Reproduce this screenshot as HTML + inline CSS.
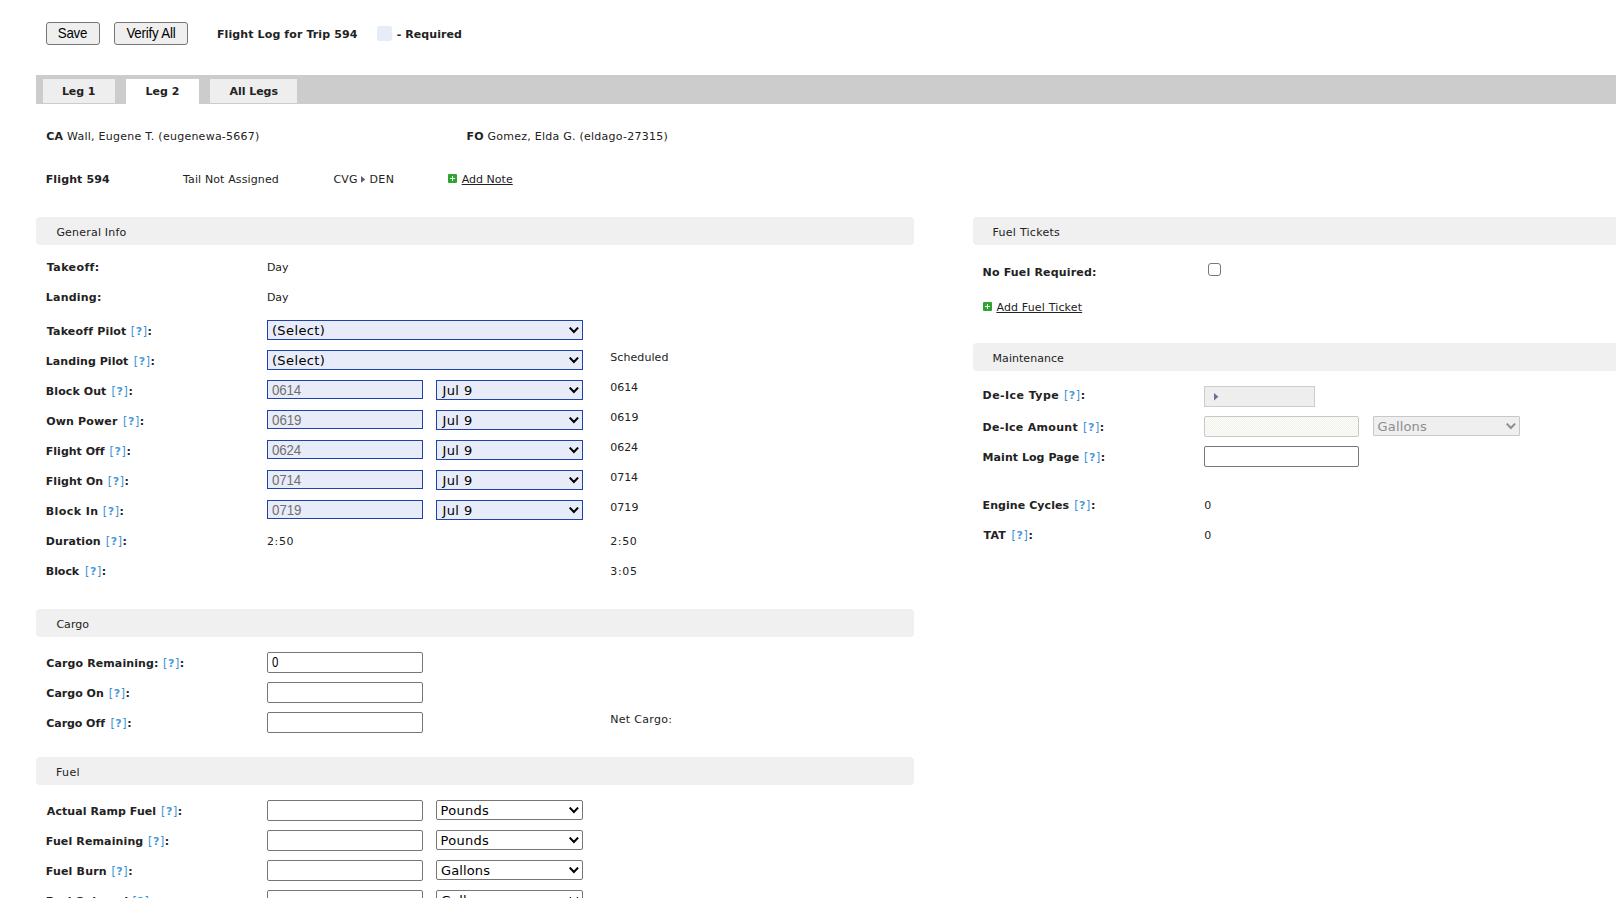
<!DOCTYPE html>
<html><head><meta charset="utf-8"><title>Flight Log for Trip 594</title>
<style>
html,body{margin:0;padding:0;background:#fff;overflow:hidden;}
body{width:1616px;height:898px;}
#root{width:1616px;height:898px;overflow:hidden;position:relative;font-family:"DejaVu Sans","Liberation Sans",sans-serif;font-size:11px;color:#222;line-height:14px;}
.a{position:absolute;white-space:nowrap;}
b,.b{font-weight:bold;}
.btn{position:absolute;box-sizing:border-box;border:1px solid #767676;border-radius:3px;background:#efefef;height:23px;}
.bt{font-family:"Liberation Sans",sans-serif;font-size:13.33px;color:#000;line-height:15px;transform:scaleY(1.08);transform-origin:0 12px;}
.hdr{position:absolute;height:28px;background:#f0f0f0;clip-path:polygon(2px 0,calc(100% - 2px) 0,calc(100% - 2px) 1px,calc(100% - 1px) 1px,calc(100% - 1px) 2px,100% 2px,100% calc(100% - 2px),calc(100% - 1px) calc(100% - 2px),calc(100% - 1px) calc(100% - 1px),calc(100% - 2px) calc(100% - 1px),calc(100% - 2px) 100%,2px 100%,2px calc(100% - 1px),1px calc(100% - 1px),1px calc(100% - 2px),0 calc(100% - 2px),0 2px,1px 2px,1px 1px,2px 1px);}
.tabbar{position:absolute;left:36px;top:75px;width:1580px;height:29px;background:#ccc;}
.tab{position:absolute;top:79px;height:24px;background:#eee;}
.tab.on{background:#fff;height:25px;}
.q{color:#3a8fd4;}.br{display:inline-block;transform:translateY(0.9px) scaleY(1.13);transform-origin:50% 84%;}
.q b{color:#4a9ada;}
.in{position:absolute;box-sizing:border-box;height:21px;width:156px;border:1px solid #767676;border-radius:2px;background:#fff;}
.in.req{height:19px;border-color:#1f41ae;border-radius:0;background:#e8ecf8;}
.it{font-family:"Liberation Sans",sans-serif;font-size:13.33px;line-height:15px;color:#000;transform:scaleY(1.08);transform-origin:0 12px;}
.ph{color:#707070;}
.it.nar{transform:scale(0.86,1.08);}
.sel{position:absolute;box-sizing:border-box;height:20px;border:1px solid #767676;border-radius:2px;background:#fff;}
.sel.req{border-color:#1f41ae;border-radius:0;background:#e8ecf8;}
.sel svg{position:absolute;right:2px;top:6px;}
.st{font-size:13px;line-height:16px;color:#000;}
.dis{color:#8c8c92;}
.lnk{text-decoration:underline;color:#222;}
.plus{position:absolute;width:9px;height:9px;background:#2ca62c;border-radius:1px;}
.plus:before{content:"";position:absolute;left:2px;top:4px;width:5px;height:1px;background:#fff;}
.plus:after{content:"";position:absolute;left:4px;top:2px;width:1px;height:5px;background:#fff;}
</style></head><body><div id="root">
<div class="btn" style="left:46px;top:22px;width:54px;"></div>
<div class="btn" style="left:114px;top:22px;width:74px;"></div>
<div class="a" style="left:377px;top:26px;width:15px;height:15px;background:#e8ecf8;clip-path:polygon(1px 0,14px 0,14px 1px,15px 1px,15px 14px,14px 14px,14px 15px,1px 15px,1px 14px,0 14px,0 1px,1px 1px);"></div>
<div class="tabbar"></div>
<div class="tab" style="left:43px;width:72px;"></div><div class="tab on" style="left:126px;width:73px;"></div><div class="tab" style="left:210px;width:87px;"></div>
<svg class="a" style="left:361px;top:175.5px;" width="5" height="7"><path d="M0 0L4.3 3.4L0 6.8Z" fill="#5c5c74"/></svg>
<div class="plus" style="left:448px;top:174px;"></div>
<div class="hdr" style="left:36px;top:217px;width:878px;"></div>
<div class="sel req" style="left:267px;top:320px;width:316px;"><svg width="12" height="8" viewBox="0 0 12 8"><path d="M1.7 0.6L5.9 5L10.1 0.6" fill="none" stroke="#000" stroke-width="2"/></svg></div>
<div class="sel req" style="left:267px;top:350px;width:316px;"><svg width="12" height="8" viewBox="0 0 12 8"><path d="M1.7 0.6L5.9 5L10.1 0.6" fill="none" stroke="#000" stroke-width="2"/></svg></div>
<div class="in req" style="left:267px;top:380px;"></div>
<div class="sel req" style="left:436px;top:380px;width:147px;"><svg width="12" height="8" viewBox="0 0 12 8"><path d="M1.7 0.6L5.9 5L10.1 0.6" fill="none" stroke="#000" stroke-width="2"/></svg></div>
<div class="in req" style="left:267px;top:410px;"></div>
<div class="sel req" style="left:436px;top:410px;width:147px;"><svg width="12" height="8" viewBox="0 0 12 8"><path d="M1.7 0.6L5.9 5L10.1 0.6" fill="none" stroke="#000" stroke-width="2"/></svg></div>
<div class="in req" style="left:267px;top:440px;"></div>
<div class="sel req" style="left:436px;top:440px;width:147px;"><svg width="12" height="8" viewBox="0 0 12 8"><path d="M1.7 0.6L5.9 5L10.1 0.6" fill="none" stroke="#000" stroke-width="2"/></svg></div>
<div class="in req" style="left:267px;top:470px;"></div>
<div class="sel req" style="left:436px;top:470px;width:147px;"><svg width="12" height="8" viewBox="0 0 12 8"><path d="M1.7 0.6L5.9 5L10.1 0.6" fill="none" stroke="#000" stroke-width="2"/></svg></div>
<div class="in req" style="left:267px;top:500px;"></div>
<div class="sel req" style="left:436px;top:500px;width:147px;"><svg width="12" height="8" viewBox="0 0 12 8"><path d="M1.7 0.6L5.9 5L10.1 0.6" fill="none" stroke="#000" stroke-width="2"/></svg></div>
<div class="hdr" style="left:36px;top:609px;width:878px;"></div>
<div class="in" style="left:267px;top:652px;"></div>
<div class="in" style="left:267px;top:682px;"></div>
<div class="in" style="left:267px;top:712px;"></div>
<div class="hdr" style="left:36px;top:757px;width:878px;"></div>
<div class="in" style="left:267px;top:800px;"></div>
<div class="sel" style="left:436px;top:800px;width:147px;"><svg width="12" height="8" viewBox="0 0 12 8"><path d="M1.7 0.6L5.9 5L10.1 0.6" fill="none" stroke="#000" stroke-width="2"/></svg></div>
<div class="in" style="left:267px;top:830px;"></div>
<div class="sel" style="left:436px;top:830px;width:147px;"><svg width="12" height="8" viewBox="0 0 12 8"><path d="M1.7 0.6L5.9 5L10.1 0.6" fill="none" stroke="#000" stroke-width="2"/></svg></div>
<div class="in" style="left:267px;top:860px;"></div>
<div class="sel" style="left:436px;top:860px;width:147px;"><svg width="12" height="8" viewBox="0 0 12 8"><path d="M1.7 0.6L5.9 5L10.1 0.6" fill="none" stroke="#000" stroke-width="2"/></svg></div>
<div class="in" style="left:267px;top:890px;"></div>
<div class="sel" style="left:436px;top:890px;width:147px;"><svg width="12" height="8" viewBox="0 0 12 8"><path d="M1.7 0.6L5.9 5L10.1 0.6" fill="none" stroke="#000" stroke-width="2"/></svg></div>
<div class="hdr" style="left:973px;top:217px;width:660px;"></div>
<div class="a" style="left:1208px;top:263px;width:13px;height:13px;box-sizing:border-box;border:1px solid #767676;border-radius:3px;background:#fff;"></div>
<div class="plus" style="left:983px;top:302px;"></div>
<div class="hdr" style="left:973px;top:343px;width:660px;"></div>
<div class="a" style="left:1204px;top:386px;width:111px;height:21px;box-sizing:border-box;border:1px solid #ccc;background:#eee;"><svg class="a" style="left:9px;top:5.7px;" width="5" height="8"><path d="M0 0L4.4 3.7L0 7.4Z" fill="#736c98"/></svg></div>
<div class="a" style="left:1204px;top:416px;width:155px;height:21px;box-sizing:border-box;border:1px solid #c8c8c8;border-radius:2px;background:conic-gradient(#f0f0f0 25%,#fefef4 0 50%,#f0f0f0 0 75%,#fefef4 0) 0 0/2px 2px;"></div>
<div class="sel" style="left:1373px;top:416px;width:147px;border-color:#c8c8c8;background:#efefef;border-radius:1px;"><svg width="12" height="8" viewBox="0 0 12 8"><path d="M1.7 0.6L5.9 5L10.1 0.6" fill="none" stroke="#8e8e94" stroke-width="2"/></svg></div>
<div class="in" style="left:1204px;top:446px;width:155px;"></div>
<div class="a bt" style="left:57.8px;top:26px;letter-spacing:-0.27px;">Save</div>
<div class="a bt" style="left:126.4px;top:26px;letter-spacing:-0.19px;">Verify All</div>
<div class="a b" style="left:216.9px;top:28px;letter-spacing:0.12px;">Flight Log for Trip 594</div>
<div class="a b" style="left:396.7px;top:28px;letter-spacing:0.07px;">- Required</div>
<div class="a b" style="left:61.9px;top:85px;letter-spacing:-0.06px;">Leg 1</div>
<div class="a b" style="left:145.4px;top:85px;letter-spacing:0.05px;">Leg 2</div>
<div class="a b" style="left:229.6px;top:85px;letter-spacing:-0.06px;">All Legs</div>
<div class="a " style="left:46.2px;top:130px;letter-spacing:0.25px;"><b>CA</b> Wall, Eugene T. (eugenewa-5667)</div>
<div class="a " style="left:466.4px;top:130px;letter-spacing:0.25px;"><b>FO</b> Gomez, Elda G. (eldago-27315)</div>
<div class="a b" style="left:45.7px;top:173px;letter-spacing:0.13px;">Flight 594</div>
<div class="a " style="left:183.0px;top:173px;letter-spacing:0.13px;">Tail Not Assigned</div>
<div class="a " style="left:333.5px;top:173px;letter-spacing:0.15px;">CVG</div>
<div class="a " style="left:369.4px;top:173px;letter-spacing:0.43px;">DEN</div>
<div class="a lnk" style="left:461.7px;top:173px;letter-spacing:0.03px;">Add Note</div>
<div class="a " style="left:56.4px;top:226px;letter-spacing:0.2px;">General Info</div>
<div class="a b" style="left:46.8px;top:261px;letter-spacing:0.41px;">Takeoff:</div>
<div class="a " style="left:266.9px;top:261px;letter-spacing:-0.05px;">Day</div>
<div class="a b" style="left:45.8px;top:291px;letter-spacing:0.22px;">Landing:</div>
<div class="a " style="left:266.9px;top:291px;letter-spacing:-0.05px;">Day</div>
<div class="a b" style="left:46.8px;top:325px;letter-spacing:0.18px;">Takeoff Pilot</div>
<div class="a q" style="left:130.8px;top:325px;letter-spacing:0.6px;"><span class="br">[</span><b>?</b><span class="br">]</span><b style="color:#222">:</b></div>
<div class="a st" style="left:271.9px;top:323px;letter-spacing:0.39px;">(Select)</div>
<div class="a b" style="left:45.8px;top:355px;letter-spacing:0.06px;">Landing Pilot</div>
<div class="a q" style="left:133.8px;top:355px;letter-spacing:0.6px;"><span class="br">[</span><b>?</b><span class="br">]</span><b style="color:#222">:</b></div>
<div class="a st" style="left:271.9px;top:353px;letter-spacing:0.39px;">(Select)</div>
<div class="a " style="left:610.2px;top:351px;letter-spacing:0.09px;">Scheduled</div>
<div class="a b" style="left:45.8px;top:385px;letter-spacing:0.09px;">Block Out</div>
<div class="a q" style="left:111.6px;top:385px;letter-spacing:0.6px;"><span class="br">[</span><b>?</b><span class="br">]</span><b style="color:#222">:</b></div>
<div class="a it ph" style="left:272.1px;top:383px;letter-spacing:-0.22px;">0614</div>
<div class="a st" style="left:442.4px;top:383px;letter-spacing:0.45px;">Jul 9</div>
<div class="a " style="left:610.2px;top:381px;letter-spacing:-0.02px;">0614</div>
<div class="a b" style="left:46.3px;top:415px;letter-spacing:0.15px;">Own Power</div>
<div class="a q" style="left:123.0px;top:415px;letter-spacing:0.6px;"><span class="br">[</span><b>?</b><span class="br">]</span><b style="color:#222">:</b></div>
<div class="a it ph" style="left:272.1px;top:413px;letter-spacing:-0.13px;">0619</div>
<div class="a st" style="left:442.4px;top:413px;letter-spacing:0.45px;">Jul 9</div>
<div class="a " style="left:610.2px;top:411px;letter-spacing:0.07px;">0619</div>
<div class="a b" style="left:45.8px;top:445px;letter-spacing:0.01px;">Flight Off</div>
<div class="a q" style="left:109.6px;top:445px;letter-spacing:0.6px;"><span class="br">[</span><b>?</b><span class="br">]</span><b style="color:#222">:</b></div>
<div class="a it ph" style="left:272.1px;top:443px;letter-spacing:-0.22px;">0624</div>
<div class="a st" style="left:442.4px;top:443px;letter-spacing:0.45px;">Jul 9</div>
<div class="a " style="left:610.2px;top:441px;letter-spacing:-0.02px;">0624</div>
<div class="a b" style="left:45.8px;top:475px;letter-spacing:0.04px;">Flight On</div>
<div class="a q" style="left:107.8px;top:475px;letter-spacing:0.6px;"><span class="br">[</span><b>?</b><span class="br">]</span><b style="color:#222">:</b></div>
<div class="a it ph" style="left:272.1px;top:473px;letter-spacing:-0.22px;">0714</div>
<div class="a st" style="left:442.4px;top:473px;letter-spacing:0.45px;">Jul 9</div>
<div class="a " style="left:610.2px;top:471px;letter-spacing:-0.02px;">0714</div>
<div class="a b" style="left:45.8px;top:505px;letter-spacing:0.44px;">Block In</div>
<div class="a q" style="left:102.8px;top:505px;letter-spacing:0.6px;"><span class="br">[</span><b>?</b><span class="br">]</span><b style="color:#222">:</b></div>
<div class="a it ph" style="left:272.1px;top:503px;letter-spacing:-0.13px;">0719</div>
<div class="a st" style="left:442.4px;top:503px;letter-spacing:0.45px;">Jul 9</div>
<div class="a " style="left:610.2px;top:501px;letter-spacing:0.07px;">0719</div>
<div class="a b" style="left:45.8px;top:535px;letter-spacing:0.09px;">Duration</div>
<div class="a q" style="left:105.8px;top:535px;letter-spacing:0.6px;"><span class="br">[</span><b>?</b><span class="br">]</span><b style="color:#222">:</b></div>
<div class="a " style="left:267.0px;top:535px;letter-spacing:0.62px;">2:50</div>
<div class="a " style="left:610.2px;top:535px;letter-spacing:0.62px;">2:50</div>
<div class="a b" style="left:45.8px;top:565px;letter-spacing:-0.04px;">Block</div>
<div class="a q" style="left:85.0px;top:565px;letter-spacing:0.6px;"><span class="br">[</span><b>?</b><span class="br">]</span><b style="color:#222">:</b></div>
<div class="a " style="left:610.2px;top:565px;letter-spacing:0.7px;">3:05</div>
<div class="a " style="left:56.4px;top:618px;letter-spacing:0.05px;">Cargo</div>
<div class="a b" style="left:46.3px;top:657px;letter-spacing:0.11px;">Cargo Remaining:</div>
<div class="a q" style="left:163.0px;top:657px;letter-spacing:0.6px;"><span class="br">[</span><b>?</b><span class="br">]</span><b style="color:#222">:</b></div>
<div class="a it nar" style="left:271.5px;top:655px;">0</div>
<div class="a b" style="left:46.3px;top:687px;letter-spacing:0.01px;">Cargo On</div>
<div class="a q" style="left:108.8px;top:687px;letter-spacing:0.6px;"><span class="br">[</span><b>?</b><span class="br">]</span><b style="color:#222">:</b></div>
<div class="a b" style="left:46.3px;top:717px;letter-spacing:-0.06px;">Cargo Off</div>
<div class="a q" style="left:110.4px;top:717px;letter-spacing:0.6px;"><span class="br">[</span><b>?</b><span class="br">]</span><b style="color:#222">:</b></div>
<div class="a " style="left:610.2px;top:713px;letter-spacing:0.31px;">Net Cargo:</div>
<div class="a " style="left:55.9px;top:766px;letter-spacing:0.4px;">Fuel</div>
<div class="a b" style="left:46.8px;top:805px;letter-spacing:0.07px;">Actual Ramp Fuel</div>
<div class="a q" style="left:161.0px;top:805px;letter-spacing:0.6px;"><span class="br">[</span><b>?</b><span class="br">]</span><b style="color:#222">:</b></div>
<div class="a st" style="left:440.6px;top:803px;letter-spacing:0.26px;">Pounds</div>
<div class="a b" style="left:45.8px;top:835px;letter-spacing:0.13px;">Fuel Remaining</div>
<div class="a q" style="left:148.0px;top:835px;letter-spacing:0.6px;"><span class="br">[</span><b>?</b><span class="br">]</span><b style="color:#222">:</b></div>
<div class="a st" style="left:440.6px;top:833px;letter-spacing:0.26px;">Pounds</div>
<div class="a b" style="left:45.8px;top:865px;letter-spacing:0.19px;">Fuel Burn</div>
<div class="a q" style="left:111.4px;top:865px;letter-spacing:0.6px;"><span class="br">[</span><b>?</b><span class="br">]</span><b style="color:#222">:</b></div>
<div class="a st" style="left:441.0px;top:863px;letter-spacing:0.13px;">Gallons</div>
<div class="a b" style="left:45.8px;top:895px;letter-spacing:-0.09px;">Fuel Onboard</div>
<div class="a q" style="left:132.6px;top:895px;letter-spacing:0.6px;"><span class="br">[</span><b>?</b><span class="br">]</span><b style="color:#222">:</b></div>
<div class="a st" style="left:441.0px;top:893px;letter-spacing:0.13px;">Gallons</div>
<div class="a " style="left:992.6px;top:226px;letter-spacing:0.26px;">Fuel Tickets</div>
<div class="a b" style="left:982.6px;top:266px;letter-spacing:0.17px;">No Fuel Required:</div>
<div class="a lnk" style="left:996.4px;top:301px;letter-spacing:0.16px;">Add Fuel Ticket</div>
<div class="a " style="left:992.6px;top:352px;letter-spacing:0.04px;">Maintenance</div>
<div class="a b" style="left:982.6px;top:389px;letter-spacing:0.44px;">De-Ice Type</div>
<div class="a q" style="left:1063.9px;top:389px;letter-spacing:0.6px;"><span class="br">[</span><b>?</b><span class="br">]</span><b style="color:#222">:</b></div>
<div class="a b" style="left:982.6px;top:421px;letter-spacing:0.3px;">De-Ice Amount</div>
<div class="a q" style="left:1083.0px;top:421px;letter-spacing:0.6px;"><span class="br">[</span><b>?</b><span class="br">]</span><b style="color:#222">:</b></div>
<div class="a st dis" style="left:1377.6px;top:419px;letter-spacing:0.14px;">Gallons</div>
<div class="a b" style="left:982.6px;top:451px;letter-spacing:0.05px;">Maint Log Page</div>
<div class="a q" style="left:1084.0px;top:451px;letter-spacing:0.6px;"><span class="br">[</span><b>?</b><span class="br">]</span><b style="color:#222">:</b></div>
<div class="a b" style="left:982.6px;top:499px;letter-spacing:0.07px;">Engine Cycles</div>
<div class="a q" style="left:1074.2px;top:499px;letter-spacing:0.6px;"><span class="br">[</span><b>?</b><span class="br">]</span><b style="color:#222">:</b></div>
<div class="a " style="left:1204.2px;top:499px;">0</div>
<div class="a b" style="left:983.6px;top:529px;letter-spacing:0.18px;">TAT</div>
<div class="a q" style="left:1011.6px;top:529px;letter-spacing:0.6px;"><span class="br">[</span><b>?</b><span class="br">]</span><b style="color:#222">:</b></div>
<div class="a " style="left:1204.2px;top:529px;">0</div>
</div></body></html>
